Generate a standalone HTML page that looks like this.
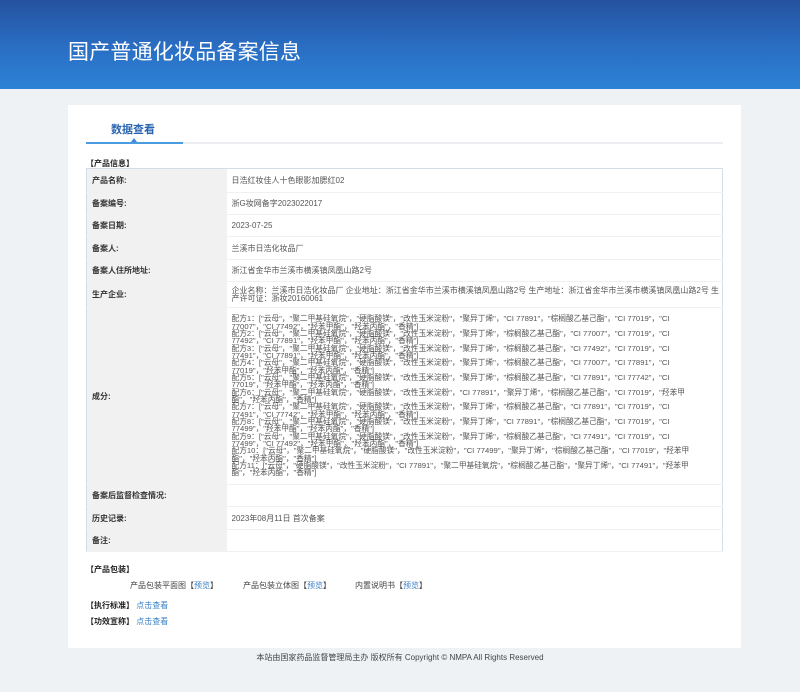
<!DOCTYPE html>
<html><head><meta charset="utf-8"><style>
*{margin:0;padding:0;box-sizing:border-box}
body{width:800px;height:692px;background:#eff2f5;font-family:"Liberation Sans","Noto Sans CJK SC",sans-serif;color:#333;position:relative;overflow:hidden}
.hd{position:absolute;left:0;top:0;width:800px;height:89px;background:linear-gradient(180deg,#2552a0 0%,#2a6fc4 55%,#2c82d6 100%)}
.hd h1{position:absolute;left:68px;top:36px;font-size:21px;font-weight:normal;color:#fff;letter-spacing:0.2px}
.panel{position:absolute;left:68px;top:105px;width:673px;height:543px;background:#fff}
.tabline{position:absolute;left:86px;top:142px;width:637px;height:2px;background:#eceef1}
.tabact{position:absolute;left:86px;top:142px;width:97px;height:2px;background:#4a9be0}
.tri{position:absolute;left:131px;top:138px;width:0;height:0;border-left:3px solid transparent;border-right:3px solid transparent;border-bottom:4px solid #3b87d5}
.tab{position:absolute;left:111px;top:121px;font-size:11px;font-weight:bold;color:#2b64b0}
.sec{position:absolute;left:86px;font-size:8px;font-weight:bold;color:#222}
table{position:absolute;left:86px;top:168px;width:637px;border-collapse:collapse;border:1px solid #d5dde8;font-size:8px}
td{border-bottom:1px solid #eef0f2;vertical-align:middle}
td.l{width:140px;background:#f1f1f1;font-weight:bold;padding-left:5px;color:#333}
td.v{padding-left:5px;color:#555}
.ing{font-size:7.7px;line-height:7.35px;padding:4px 0 4px 5px;color:#555}
.pk{position:absolute;top:580px;font-size:8px;color:#444}
a{color:#3a80c8;text-decoration:none}
.ft{position:absolute;top:652px;left:0;width:800px;text-align:center;font-size:8px;color:#444}
</style></head><body>
<div class="hd"><h1>国产普通化妆品备案信息</h1></div>
<div class="panel"></div>
<div class="tab">数据查看</div>
<div class="tabline"></div><div class="tabact"></div><div class="tri"></div>
<div class="sec" style="top:158px">【产品信息】</div>
<table>
<tr style="height:24px"><td class="l">产品名称:</td><td class="v">日浩红妆佳人十色眼影加腮红02</td></tr>
<tr style="height:22px"><td class="l">备案编号:</td><td class="v">浙G妆网备字2023022017</td></tr>
<tr style="height:22px"><td class="l">备案日期:</td><td class="v">2023-07-25</td></tr>
<tr style="height:23px"><td class="l">备案人:</td><td class="v">兰溪市日浩化妆品厂</td></tr>
<tr style="height:22px"><td class="l">备案人住所地址:</td><td class="v">浙江省金华市兰溪市横溪镇凤凰山路2号</td></tr>
<tr style="height:26px"><td class="l">生产企业:</td><td class="v" style="line-height:8px">企业名称：兰溪市日浩化妆品厂 企业地址：浙江省金华市兰溪市横溪镇凤凰山路2号 生产地址：浙江省金华市兰溪市横溪镇凤凰山路2号 生产许可证：浙妆20160061</td></tr>
<tr style="height:177px"><td class="l">成分:</td><td class="ing">配方1：["云母"，"聚二甲基硅氧烷"，"硬脂酸镁"，"改性玉米淀粉"，"聚异丁烯"，"CI 77891"，"棕榈酸乙基己酯"，"CI 77019"，"CI<br>77007"，"CI 77492"，"羟苯甲酯"，"羟苯丙酯"，"香精"]<br>配方2：["云母"，"聚二甲基硅氧烷"，"硬脂酸镁"，"改性玉米淀粉"，"聚异丁烯"，"棕榈酸乙基己酯"，"CI 77007"，"CI 77019"，"CI<br>77492"，"CI 77891"，"羟苯甲酯"，"羟苯丙酯"，"香精"]<br>配方3：["云母"，"聚二甲基硅氧烷"，"硬脂酸镁"，"改性玉米淀粉"，"聚异丁烯"，"棕榈酸乙基己酯"，"CI 77492"，"CI 77019"，"CI<br>77491"，"CI 77891"，"羟苯甲酯"，"羟苯丙酯"，"香精"]<br>配方4：["云母"，"聚二甲基硅氧烷"，"硬脂酸镁"，"改性玉米淀粉"，"聚异丁烯"，"棕榈酸乙基己酯"，"CI 77007"，"CI 77891"，"CI<br>77019"，"羟苯甲酯"，"羟苯丙酯"，"香精"]<br>配方5：["云母"，"聚二甲基硅氧烷"，"硬脂酸镁"，"改性玉米淀粉"，"聚异丁烯"，"棕榈酸乙基己酯"，"CI 77891"，"CI 77742"，"CI<br>77019"，"羟苯甲酯"，"羟苯丙酯"，"香精"]<br>配方6：["云母"，"聚二甲基硅氧烷"，"硬脂酸镁"，"改性玉米淀粉"，"CI 77891"，"聚异丁烯"，"棕榈酸乙基己酯"，"CI 77019"，"羟苯甲<br>酯"，"羟苯丙酯"，"香精"]<br>配方7：["云母"，"聚二甲基硅氧烷"，"硬脂酸镁"，"改性玉米淀粉"，"聚异丁烯"，"棕榈酸乙基己酯"，"CI 77891"，"CI 77019"，"CI<br>77491"，"CI 77742"，"羟苯甲酯"，"羟苯丙酯"，"香精"]<br>配方8：["云母"，"聚二甲基硅氧烷"，"硬脂酸镁"，"改性玉米淀粉"，"聚异丁烯"，"CI 77891"，"棕榈酸乙基己酯"，"CI 77019"，"CI<br>77499"，"羟苯甲酯"，"羟苯丙酯"，"香精"]<br>配方9：["云母"，"聚二甲基硅氧烷"，"硬脂酸镁"，"改性玉米淀粉"，"聚异丁烯"，"棕榈酸乙基己酯"，"CI 77491"，"CI 77019"，"CI<br>77499"，"CI 77492"，"羟苯甲酯"，"羟苯丙酯"，"香精"]<br>配方10：["云母"，"聚二甲基硅氧烷"，"硬脂酸镁"，"改性玉米淀粉"，"CI 77499"，"聚异丁烯"，"棕榈酸乙基己酯"，"CI 77019"，"羟苯甲<br>酯"，"羟苯丙酯"，"香精"]<br>配方11：["云母"，"硬脂酸镁"，"改性玉米淀粉"，"CI 77891"，"聚二甲基硅氧烷"，"棕榈酸乙基己酯"，"聚异丁烯"，"CI 77491"，"羟苯甲<br>酯"，"羟苯丙酯"，"香精"]</td></tr>
<tr style="height:22px"><td class="l">备案后监督检查情况:</td><td class="v"></td></tr>
<tr style="height:23px"><td class="l">历史记录:</td><td class="v">2023年08月11日 首次备案</td></tr>
<tr style="height:22px"><td class="l">备注:</td><td class="v"></td></tr>
</table>
<div class="sec" style="top:564px">【产品包装】</div>
<div class="pk" style="left:130px">产品包装平面图【<a>预览</a>】</div>
<div class="pk" style="left:243px">产品包装立体图【<a>预览</a>】</div>
<div class="pk" style="left:355px">内置说明书【<a>预览</a>】</div>
<div class="sec" style="top:600px">【执行标准】 <a style="font-weight:normal">点击查看</a></div>
<div class="sec" style="top:616px">【功效宣称】 <a style="font-weight:normal">点击查看</a></div>
<div class="ft">本站由国家药品监督管理局主办 版权所有 Copyright © NMPA All Rights Reserved</div>
</body></html>
